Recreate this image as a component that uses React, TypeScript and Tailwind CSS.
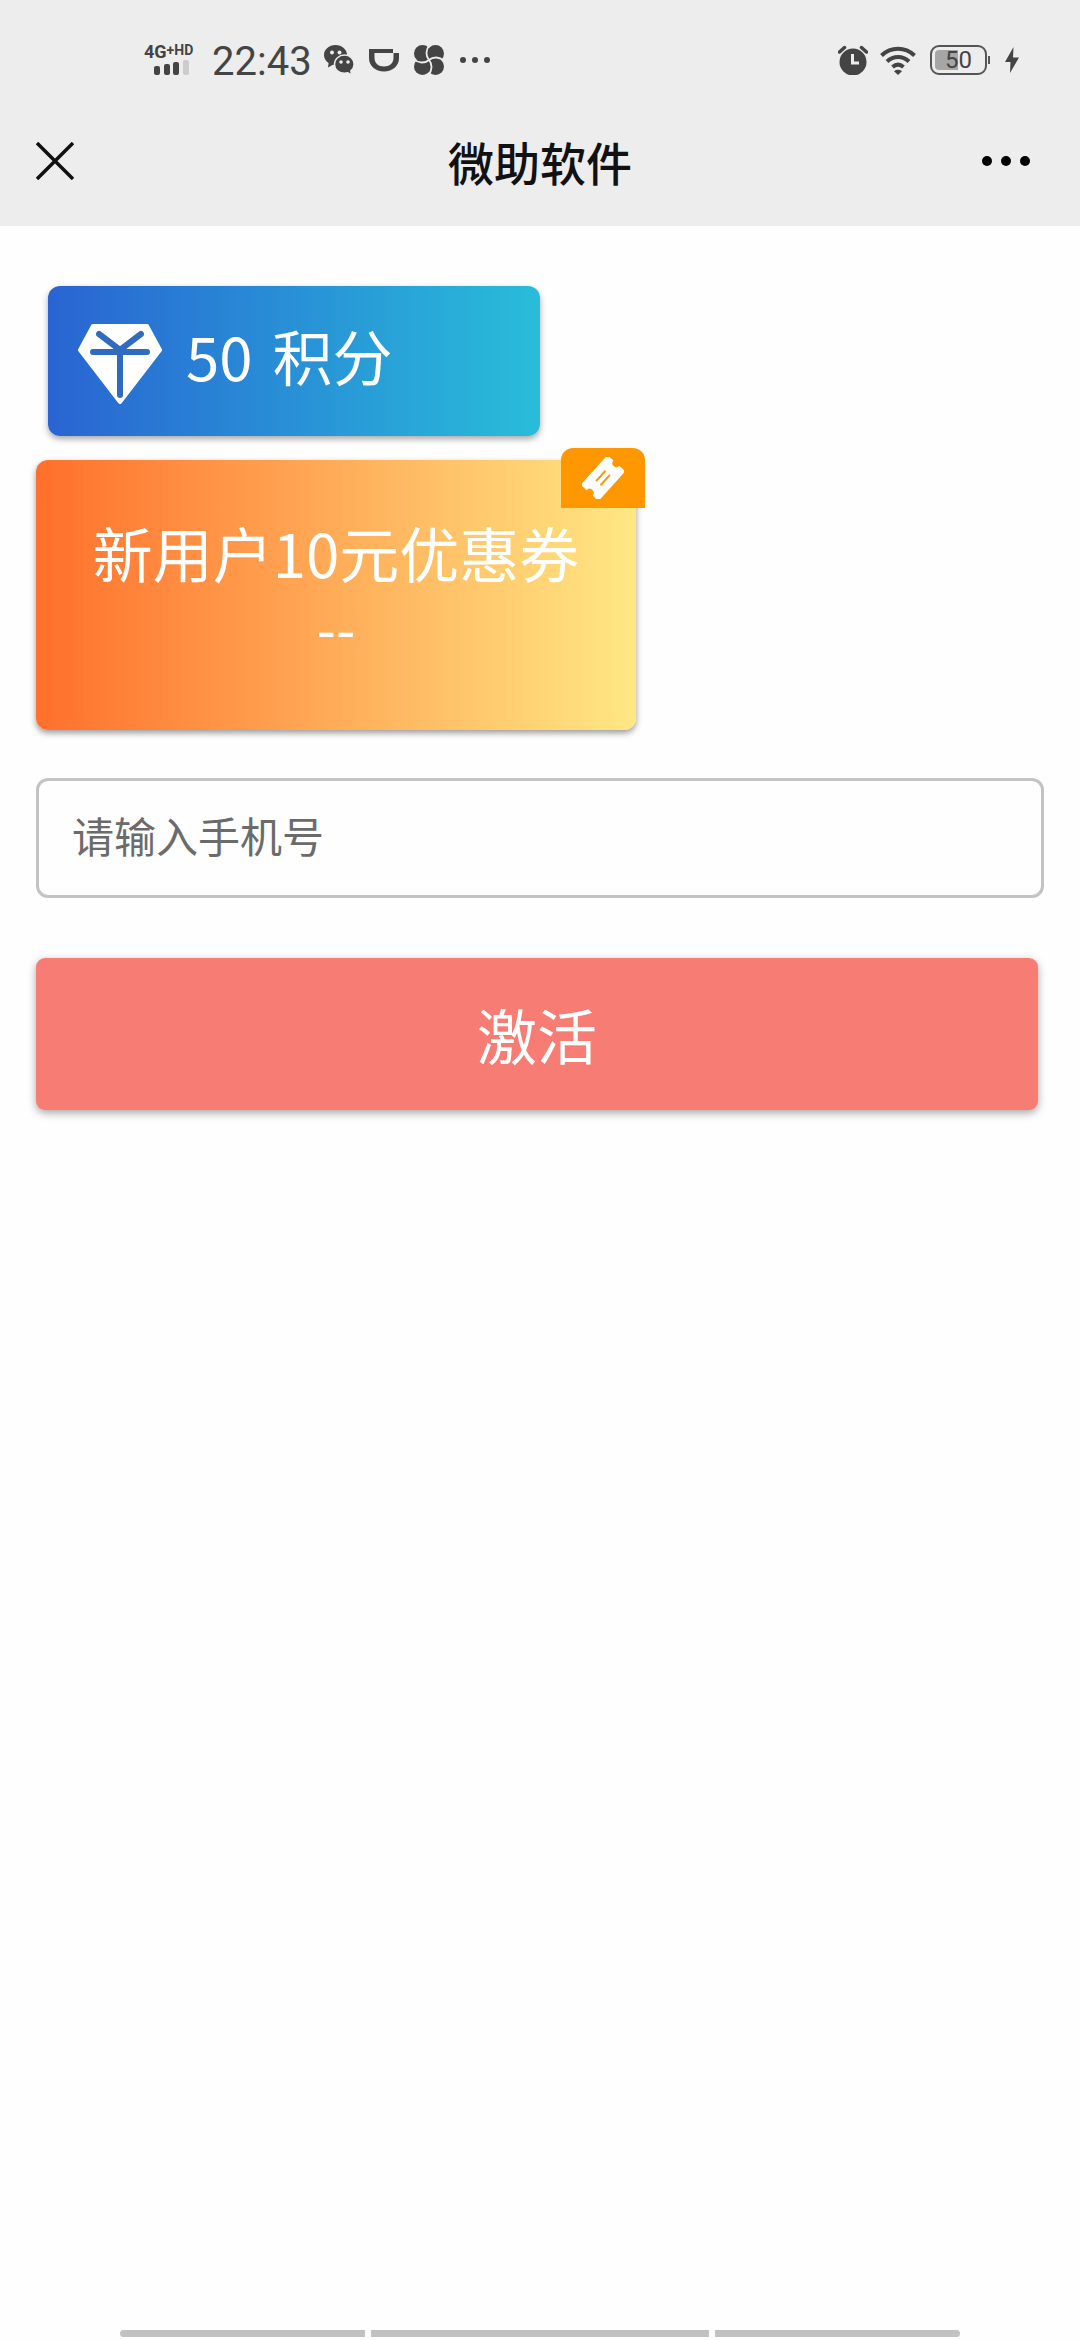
import {useState} from "react";

function StatusBar() {
    return (
        <div className="flex h-24 items-center justify-between pl-[144px] pr-[60px] pt-6 text-[#444444]">
            <div className="flex items-center">
                <div className="flex w-[58px] flex-col">
                    <div className="flex items-start font-['Roboto'] font-bold">
                        <span className="text-[18px] leading-4">4G</span>
                        <span className="text-[14px] leading-3">+</span>
                        <span className="text-[14px] leading-3">HD</span>
                    </div>
                    <svg className="ml-2.5 h-4 w-9" viewBox="0 0 36 16" fill="currentColor">
                        <rect x="0" y="6" width="6" height="9" rx="2"/>
                        <rect x="10" y="4" width="6" height="11" rx="2"/>
                        <rect x="19" y="2" width="6" height="13" rx="2"/>
                        <rect x="29" y="0" width="6" height="15" rx="2" fill="#cccccc"/>
                    </svg>
                </div>
                <span className="ml-[10px] pt-1 font-['Roboto'] text-[40px] leading-10">22:43</span>

                {/* notification icons */}
                <div className="ml-3 flex items-center gap-[15px]">
                    <svg className="h-[30px] w-[30px]" viewBox="0 0 30 30">
                        <path d="M11.500 0C5 0 0 4.500 0 10c0 3.300 1.800 6.200 4.600 8L4 22.500l5-2.700c6.500 1.500 14-2.500 14-9.800C23 4.500 18 0 11.500 0z" fill="currentColor"/>
                        <circle cx="8" cy="7.500" r="2" fill="#ededed"/>
                        <circle cx="15.500" cy="7.500" r="2" fill="#ededed"/>
                        <path d="M20.500 10c-5.500 0-10 4-10 9.200s4.500 9 10 9c1.200 0 2.300-.2 3.400-.5l3.600 2.300-.7-4.200c2-1.700 3.300-4 3.300-6.600 0-5.200-4.300-9.200-9.600-9.200z" fill="currentColor" stroke="#ededed" strokeWidth="1.400"/>
                        <circle cx="17" cy="17" r="1.800" fill="#ededed"/>
                        <circle cx="24" cy="17" r="1.800" fill="#ededed"/>
                    </svg>
                    <svg className="h-[30px] w-[30px]" viewBox="0 0 30 30">
                        <path d="M0 4h24v4H5.500v5c0 5 4 8.500 9.500 8.500s9.500-3.500 9.500-8.500V8H30v5c0 8-6.500 13.500-15 13.500S0 21 0 13z" fill="currentColor"/>
                    </svg>
                    <svg className="h-[30px] w-[30px]" viewBox="0 0 30 30">
                        <g fill="currentColor">
                            <circle cx="8.500" cy="8.500" r="8.500"/>
                            <circle cx="21.500" cy="8.500" r="8.500"/>
                            <circle cx="21.500" cy="21.500" r="8.500"/>
                            <circle cx="8.500" cy="21.500" r="8.500"/>
                        </g>
                        <g fill="none" stroke="#ededed" strokeWidth="1.800">
                            <path d="M16 0C11.500 4 11.500 11 15 15"/>
                            <path d="M30 16C26 11.500 19 11.500 15 15"/>
                            <path d="M14 30C18.500 26 18.500 19 15 15"/>
                            <path d="M0 14C4 18.500 11 18.500 15 15"/>
                        </g>
                    </svg>
                    <svg className="h-[6px] w-8" viewBox="0 0 32 6" fill="currentColor">
                        <circle cx="4" cy="3" r="3"/>
                        <circle cx="16" cy="3" r="3"/>
                        <circle cx="28" cy="3" r="3"/>
                    </svg>
                </div>
            </div>

            <div className="flex items-center">
                <svg className="h-[30px] w-[30px]" viewBox="0 0 30 30">
                    <circle cx="15" cy="17" r="13.500" fill="currentColor"/>
                    <path d="M1.500 7 6.500 2.500M28.500 7 23.500 2.500" stroke="currentColor" strokeWidth="3.500" strokeLinecap="round"/>
                    <path d="M14.500 9v9H21" fill="none" stroke="#ededed" strokeWidth="3"/>
                </svg>
                <svg className="ml-3 h-[30px] w-9" viewBox="0 0 36 30" fill="none" stroke="currentColor" strokeWidth="4">
                    <path d="M1.500 10.500c9.500-9 23.500-9 33 0"/>
                    <path d="M7 16.500c6.500-6 15.500-6 22 0"/>
                    <path d="M12.500 22c3.500-3 7.500-3 11 0"/>
                    <path d="M14 26.200 18 30l4-3.800c-2.500-1.800-5.500-1.800-8 0z" fill="currentColor" stroke="none"/>
                </svg>
                <div className="ml-3.5 flex items-center">
                    <div className="flex h-[30px] w-[57px] items-center justify-center rounded-[9px] border-2 border-[#555555] bg-linear-to-r from-[#a6a6a6] from-50% to-transparent to-50% bg-clip-content p-[3px] font-['Roboto'] text-[24px] leading-6">
                        50
                    </div>
                    <div className="ml-px h-2 w-[2px] bg-[#555555]"/>
                </div>
                <svg className="ml-3.5 h-[26px] w-4" viewBox="0 0 16 26" fill="currentColor">
                    <path d="M9.500 0 1 15h5.500L6 26l9-15.500H9z"/>
                </svg>
            </div>
        </div>
    );
}

function TitleBar() {
    return (
        <div className="grid h-[130px] grid-cols-[1fr_auto_1fr] items-center px-9">
            <button aria-label="关闭" className="justify-self-start">
                <svg className="h-[38px] w-[38px]" viewBox="0 0 38 38" stroke="#111111" strokeWidth="3.500">
                    <path d="M1 1l36 36M37 1 1 37"/>
                </svg>
            </button>
            <h1 className="text-[46px] font-medium leading-[60px] text-[#111111]">微助软件</h1>
            <button aria-label="更多" className="mr-3.5 justify-self-end">
                <svg className="h-[10px] w-12" viewBox="0 0 48 10" fill="#000000">
                    <circle cx="5" cy="5" r="5"/>
                    <circle cx="24" cy="5" r="5"/>
                    <circle cx="43" cy="5" r="5"/>
                </svg>
            </button>
        </div>
    );
}

function PointsCard() {
    return (
        <div className="ml-3 flex h-[150px] w-[492px] items-center rounded-xl bg-linear-to-r/srgb from-[#2964d2] to-[#28bdda] px-[30px] text-white shadow-[0_3px_6px_rgba(0,0,0,0.35)]">
            <svg className="mt-1.5 h-20 w-[84px]" viewBox="0 0 84 80">
                <path d="M15 2h54l13 24-40 52L2 26z" fill="#ffffff" stroke="#ffffff" strokeWidth="4" strokeLinejoin="round"/>
                <path d="M21 10 42 26 63 10M15 28h54M42 28v43" fill="none" stroke="#2f6cc0" strokeWidth="6" strokeLinecap="round"/>
            </svg>
            <div className="ml-6 flex gap-5 pb-3 text-[60px] leading-[72px]">
                <span>50</span>
                <span>积分</span>
            </div>
        </div>
    );
}

function CouponCard() {
    return (
        <div className="relative mt-6 flex h-[270px] w-[600px] flex-col items-center rounded-xl bg-linear-to-r/srgb from-[#ff702c] to-[#ffe884] pt-14 text-white shadow-[0_3px_6px_rgba(0,0,0,0.4)]">
            <span className="text-[60px] leading-[72px]">新用户10元优惠券</span>
            <span className="font-['DejaVu_Sans'] text-[54px] leading-[88px]">--</span>
            {/* corner badge */}
            <div className="absolute -right-[9px] -top-3 flex h-[60px] w-[84px] items-center justify-center rounded-t-xl bg-[#ff9800]">
                <svg className="h-[42px] w-[42px]" viewBox="0 0 42 42">
                    <g transform="rotate(-48 21 21)">
                        <path d="M4 9h34a3 3 0 0 1 3 3v5a4 4 0 0 0 0 8v5a3 3 0 0 1-3 3H4a3 3 0 0 1-3-3v-5a4 4 0 0 0 0-8v-5a3 3 0 0 1 3-3z" fill="#ffffff"/>
                        <path d="M14 18h14M14 24h14" stroke="#ff9800" strokeWidth="2"/>
                    </g>
                </svg>
            </div>
        </div>
    );
}

export default function App() {

    const [phone, setPhone] = useState("")

    return (
        <div className="flex min-h-screen flex-col bg-[#fefefe] font-['Noto_Sans_CJK_SC',sans-serif]">
            <header className="bg-[#ededed]">
                <StatusBar/>
                <TitleBar/>
            </header>

            <main className="flex-1 px-9 pt-[60px]">
                <PointsCard/>
                <CouponCard/>
                <form onSubmit={(e) => e.preventDefault()}>
                    <input
                        type="tel"
                        aria-label="手机号"
                        placeholder="请输入手机号"
                        value={phone}
                        onChange={(e) => setPhone(e.target.value)}
                        className="mt-12 block h-[120px] w-full rounded-xl border-[3px] border-[#c3c3c3] bg-transparent px-[33px] pb-2 text-[42px] leading-[60px] text-[#333333] outline-none placeholder:text-[#6b6b6b]"
                    />
                    <div className="pr-1.5 pt-[60px]">
                        <button
                            type="submit"
                            className="block h-[152px] w-full rounded-[9px] bg-[#f77d74] text-[60px] leading-[72px] text-white shadow-[0_3px_8px_rgba(0,0,0,0.35)]">
                            激活
                        </button>
                    </div>
                </form>
            </main>

            {/* gesture bars */}
            <div className="flex gap-1.5 px-[120px] pb-[3px]">
                <div className="h-[7px] flex-[245] rounded-l-full bg-[#c1c1c1]"/>
                <div className="h-[7px] flex-[338] bg-[#c1c1c1]"/>
                <div className="h-[7px] flex-[245] rounded-r-full bg-[#c1c1c1]"/>
            </div>
        </div>
    );
}
